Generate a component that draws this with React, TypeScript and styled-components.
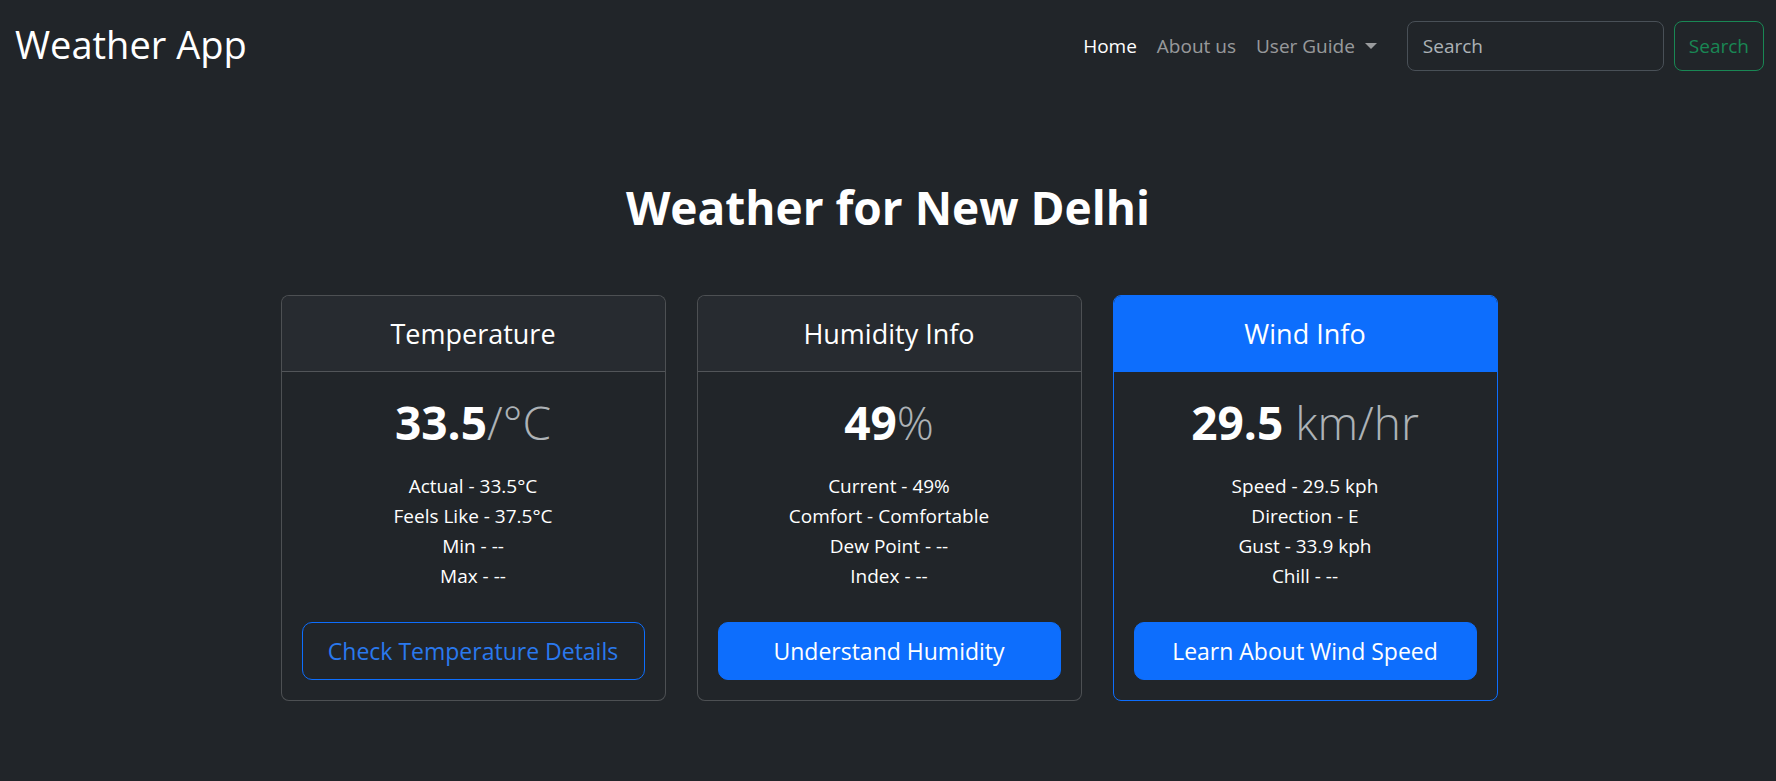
import React from 'react';
import styled, { createGlobalStyle } from 'styled-components';

const GlobalStyle = createGlobalStyle`
  body {
    margin: 0;
    background-color: #212529;
    color: #dee2e6;
    font-family: 'Open Sans', 'Noto Sans', sans-serif;
  }
  * {
    box-sizing: border-box;
  }
`;

const Navbar = styled.nav`
  display: flex;
  align-items: center;
  justify-content: space-between;
  height: 92px;
  padding: 0 12px 0 15px;
`;

const Brand = styled.a`
  font-size: 38px;
  color: #fff;
  text-decoration: none;
  line-height: 1;
  margin-top: -4px;
`;

const NavRight = styled.div`
  display: flex;
  align-items: center;
`;

const NavList = styled.ul`
  display: flex;
  list-style: none;
  margin: 0 20px 0 0;
  padding: 0;
`;

const NavLink = styled.a<{ $active?: boolean }>`
  display: flex;
  align-items: center;
  padding: 8px 10px;
  font-size: 19px;
  color: ${(p) => (p.$active ? '#fff' : 'rgba(255, 255, 255, 0.55)')};
  text-decoration: none;
  cursor: pointer;
`;

const Caret = styled.span`
  display: inline-block;
  margin-left: 10px;
  border-top: 6px solid rgba(255, 255, 255, 0.55);
  border-left: 6px solid transparent;
  border-right: 6px solid transparent;
`;

const SearchForm = styled.form`
  display: flex;
  gap: 10px;
`;

const SearchInput = styled.input`
  width: 257px;
  height: 50px;
  padding: 8px 15px;
  font-family: inherit;
  font-size: 19px;
  color: #dee2e6;
  background-color: #212529;
  border: 1px solid #495057;
  border-radius: 8px;
  outline: none;

  &::placeholder {
    color: rgba(222, 226, 230, 0.75);
  }
`;

const OutlineSuccess = styled.button`
  height: 50px;
  padding: 0 14px;
  font-family: inherit;
  font-size: 19px;
  color: #198754;
  background: transparent;
  border: 1px solid #198754;
  border-radius: 8px;
`;

const Main = styled.main`
  display: flex;
  flex-direction: column;
  align-items: center;
`;

const Title = styled.h1`
  margin: 88px 0 60px;
  font-size: 46px;
  font-weight: 700;
  line-height: 55px;
  color: #fff;
`;

const CardRow = styled.div`
  display: flex;
  gap: 31px;
  padding-left: 2px;
`;

const Card = styled.section<{ $primary?: boolean }>`
  width: 385px;
  display: flex;
  flex-direction: column;
  border: 1px solid ${(p) => (p.$primary ? '#0d6efd' : 'rgba(255, 255, 255, 0.2)')};
  border-radius: 8px;
  overflow: hidden;
  background-color: #212529;
`;

const CardHeader = styled.header<{ $primary?: boolean }>`
  height: 76px;
  display: flex;
  align-items: center;
  justify-content: center;
  font-size: 27px;
  color: #fff;
  background-color: ${(p) => (p.$primary ? '#0d6efd' : '#272b30')};
  border-bottom: 1px solid ${(p) => (p.$primary ? '#0d6efd' : 'rgba(255, 255, 255, 0.2)')};
`;

const CardBody = styled.div`
  display: flex;
  flex-direction: column;
  align-items: stretch;
  padding: 20px;
  text-align: center;
`;

const BigValue = styled.div`
  font-size: 46px;
  font-weight: 700;
  line-height: 60px;
  color: #fff;
  margin-bottom: 19px;
`;

const Unit = styled.span`
  font-weight: 300;
  color: rgba(222, 226, 230, 0.75);
`;

const Details = styled.ul`
  list-style: none;
  margin: 0 0 31px;
  padding: 0;
  font-size: 19px;
  line-height: 30px;
  color: #fff;
`;

const ActionButton = styled.button<{ $outline?: boolean }>`
  height: 58px;
  font-family: inherit;
  font-size: 23px;
  color: ${(p) => (p.$outline ? '#2a79ee' : '#fff')};
  background-color: ${(p) => (p.$outline ? 'transparent' : '#0d6efd')};
  border: 1px solid #0d6efd;
  border-radius: 10px;
  cursor: pointer;
`;

type Info = {
  title: string;
  value: string;
  unit: string;
  lines: string[];
  action: string;
  outline?: boolean;
  primary?: boolean;
};

const cards: Info[] = [
  {
    title: 'Temperature',
    value: '33.5',
    unit: '/°C',
    lines: ['Actual - 33.5°C', 'Feels Like - 37.5°C', 'Min - --', 'Max - --'],
    action: 'Check Temperature Details',
    outline: true,
  },
  {
    title: 'Humidity Info',
    value: '49',
    unit: '%',
    lines: ['Current - 49%', 'Comfort - Comfortable', 'Dew Point - --', 'Index - --'],
    action: 'Understand Humidity',
  },
  {
    title: 'Wind Info',
    value: '29.5',
    unit: ' km/hr',
    lines: ['Speed - 29.5 kph', 'Direction - E', 'Gust - 33.9 kph', 'Chill - --'],
    action: 'Learn About Wind Speed',
    primary: true,
  },
];

const App: React.FC = () => (
  <>
    <GlobalStyle />
    <Navbar>
      <Brand href="#">Weather App</Brand>
      <NavRight>
        <NavList>
          <li>
            <NavLink $active>Home</NavLink>
          </li>
          <li>
            <NavLink>About us</NavLink>
          </li>
          <li>
            <NavLink>
              User Guide
              <Caret />
            </NavLink>
          </li>
        </NavList>
        <SearchForm onSubmit={(e) => e.preventDefault()}>
          <SearchInput type="search" placeholder="Search" />
          <OutlineSuccess type="submit">Search</OutlineSuccess>
        </SearchForm>
      </NavRight>
    </Navbar>
    <Main>
      <Title>Weather for New Delhi</Title>
      <CardRow>
        {cards.map((c) => (
          <Card key={c.title} $primary={c.primary}>
            <CardHeader $primary={c.primary}>{c.title}</CardHeader>
            <CardBody>
              <BigValue>
                {c.value}
                <Unit>{c.unit}</Unit>
              </BigValue>
              <Details>
                {c.lines.map((l) => (
                  <li key={l}>{l}</li>
                ))}
              </Details>
              <ActionButton $outline={c.outline}>{c.action}</ActionButton>
            </CardBody>
          </Card>
        ))}
      </CardRow>
    </Main>
  </>
);

export default App;
